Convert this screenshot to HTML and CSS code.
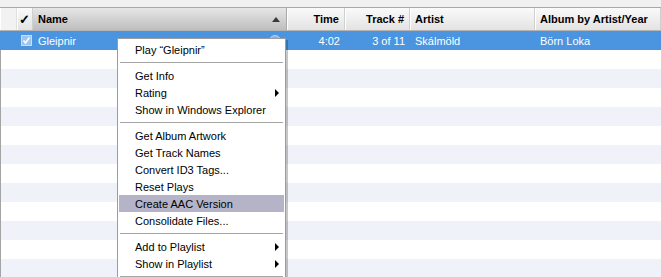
FILE: index.html
```html
<!DOCTYPE html>
<html>
<head>
<meta charset="utf-8">
<title>Library</title>
<link rel="stylesheet" href="styles.css">
</head>
<body>
<div class="topband"></div>
<div class="head">
  <div class="hc blank"></div>
  <div class="hc chk">&#10003;</div>
  <div class="hc name sorted"><span>Name</span><span class="sort"></span></div>
  <div class="hc right">Time</div>
  <div class="hc right">Track #</div>
  <div class="hc">Artist</div>
  <div class="hc">Album by Artist/Year</div>
</div>
<div class="list">
  <div class="row sel">
    <div class="c"></div>
    <div class="c chk"><span class="box"><svg width="9" height="9" viewBox="0 0 9 9"><path d="M1.5 4.5 L3.5 7 L7.5 1.5" fill="none" stroke="#fff" stroke-width="1.6"/></svg></span></div>
    <div class="c name"><span>Gleipnir</span><span class="go"></span></div>
    <div class="c right">4:02</div>
    <div class="c right">3 of 11</div>
    <div class="c">Skálmöld</div>
    <div class="c">Börn Loka</div>
  </div>
  <div class="row"></div>
  <div class="row alt"></div>
  <div class="row"></div>
  <div class="row alt"></div>
  <div class="row"></div>
  <div class="row alt"></div>
  <div class="row"></div>
  <div class="row alt"></div>
  <div class="row"></div>
  <div class="row alt"></div>
  <div class="row"></div>
  <div class="row alt"></div>
</div>

<div class="menu">
  <div class="item">Play “Gleipnir”</div>
  <div class="sep"></div>
  <div class="item">Get Info</div>
  <div class="item sub">Rating<span class="arrow"></span></div>
  <div class="item">Show in Windows Explorer</div>
  <div class="sep"></div>
  <div class="item">Get Album Artwork</div>
  <div class="item">Get Track Names</div>
  <div class="item">Convert ID3 Tags...</div>
  <div class="item">Reset Plays</div>
  <div class="item hover">Create AAC Version</div>
  <div class="item">Consolidate Files...</div>
  <div class="sep"></div>
  <div class="item sub">Add to Playlist<span class="arrow"></span></div>
  <div class="item sub">Show in Playlist<span class="arrow"></span></div>
  <div class="sep"></div>
</div>
</body>
</html>
```

FILE: styles.css
```css
html, body {
    margin: 0;
    padding: 0;
    background: #fff;
    overflow: hidden;
    height: 277px;
}

body {
    font-family: "Liberation Sans", Arial, sans-serif;
    font-size: 11px;
    color: #000;
    position: relative;
}

.topband {
    height: 7px;
    background: #f1f1f1;
    border-bottom: 1px solid #a8a8a8;
}

.head, .row {
    display: grid;
    grid-template-columns: 17px 16px 254px 58px 65px 125px 126px;
}

.head {
    height: 22px;
    border-bottom: 1px solid #b4b4b4;
    background: linear-gradient(#fafafa, #e3e3e3);
}

.hc {
    display: flex;
    align-items: center;
    padding: 0 5px;
    font-weight: bold;
    white-space: nowrap;
    overflow: hidden;
    border-right: 1px solid #cfcfcf;
    box-shadow: inset 1px 0 0 #fff;
}

.hc.blank {
    background: #f2f2f2;
    border-right-color: #e0e0e0;
}

.hc.chk {
    padding: 0;
    justify-content: center;
    font-size: 13px;
}

.hc.sorted {
    background: linear-gradient(#e6e6e6, #bebebe);
    justify-content: space-between;
    border-right-color: #a9a9a9;
    box-shadow: none;
}

.sort {
    width: 0;
    height: 0;
    border-left: 4px solid transparent;
    border-right: 4px solid transparent;
    border-bottom: 5px solid #3a3a3a;
    margin-right: 1px;
}

.hc.right, .c.right {
    justify-content: flex-end;
    padding-right: 5px;
}

.list {
    border-left: 1px solid #a4a4a4;
}

.row {
    height: 19px;
}

.row.alt {
    background: #eff3f9;
}

.row.sel {
    background: #4b95e0;
    color: #fff;
    margin-left: -1px;
}

.c {
    display: flex;
    align-items: center;
    padding: 0 5px;
    white-space: nowrap;
    overflow: hidden;
}

.c.chk {
    padding: 0 0 0 4px;
}

.box {
    display: block;
    width: 9px;
    height: 9px;
    background: #9cc4ee;
    border: 1px solid #c9def5;
}

.box svg {
    display: block;
}

.c.name {
    justify-content: space-between;
}

.go {
    width: 10px;
    height: 10px;
    border-radius: 50%;
    background: #86b6ea;
    border: 1px solid #b9d4f3;
    margin-right: 1px;
}

.menu {
    position: absolute;
    left: 117px;
    top: 38px;
    width: 167px;
    padding: 2px 0 30px;
    background: #fff;
    border: 1px solid #9c9c9c;
    box-shadow: 2px 2px 0 rgba(0, 0, 0, 0.22);
}

.item {
    display: flex;
    align-items: center;
    justify-content: space-between;
    height: 17px;
    margin: 0 1px;
    padding-left: 16px;
    white-space: nowrap;
}

.item.hover {
    background: #b5b3c7;
}

.arrow {
    width: 0;
    height: 0;
    border-top: 4px solid transparent;
    border-bottom: 4px solid transparent;
    border-left: 4px solid #000;
    margin-right: 5px;
}

.sep {
    height: 1px;
    margin: 4px 2px;
    background: #a5a5a5;
}
```
